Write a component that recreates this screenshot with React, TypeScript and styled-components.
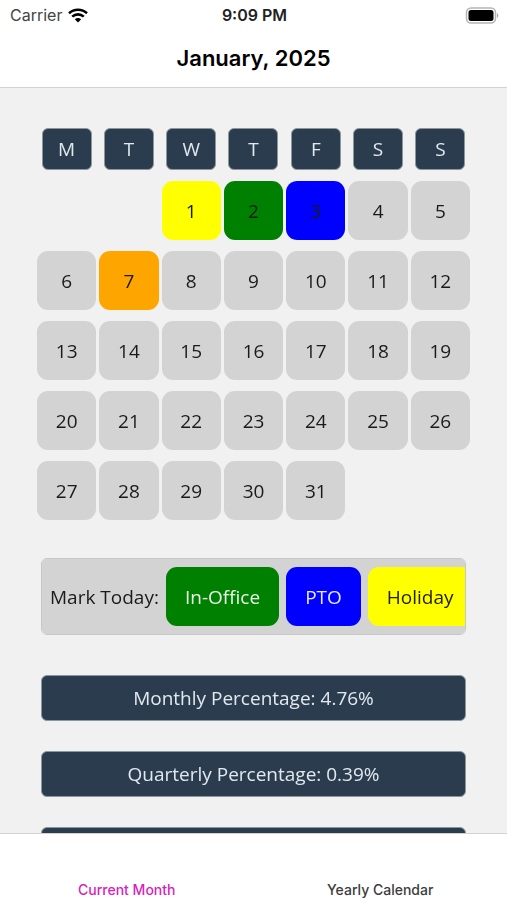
import React, { useState } from "react";
import styled, { createGlobalStyle } from "styled-components";

const GlobalStyle = createGlobalStyle`
  *, *::before, *::after { box-sizing: border-box; }
  body { margin: 0; background: #f1f1f1; }
  button { font: inherit; border: 0; padding: 0; cursor: pointer; }
`;

const bodyFont = `"Open Sans", "Noto Sans", sans-serif`;
const systemFont = `Inter, Roboto, sans-serif`;

const Screen = styled.div`
  display: flex;
  flex-direction: column;
  height: 100vh;
  background: #f1f1f1;
  color: #1a1a1a;
  font-family: ${bodyFont};
  font-size: 19px;
  line-height: 26px;
`;

const Header = styled.header`
  flex: none;
  background: #fff;
  border-bottom: 1px solid #d2d2d2;
  font-family: ${systemFont};
`;

const StatusBar = styled.div`
  display: grid;
  grid-template-columns: 1fr auto 1fr;
  align-items: center;
  height: 30px;
  padding: 0 8px 0 10px;
  font-size: 16px;
  line-height: 20px;
  color: #444;
`;

const Carrier = styled.span`
  display: flex;
  align-items: center;
  gap: 6px;
`;

const Clock = styled.time`
  color: #222;
  font-weight: 600;
`;

const BatteryIcon = styled.svg`
  justify-self: end;
`;

const Title = styled.h1`
  margin: 0;
  padding: 13px 0 14px;
  color: #000;
  font-size: 22px;
  font-weight: 600;
  line-height: 30px;
  text-align: center;
`;

const Content = styled.main`
  flex: 1;
  min-height: 0;
  overflow-y: auto;
  scrollbar-width: none;
  padding: 40px 37px;
`;

const Calendar = styled.section`
  display: grid;
  grid-template-columns: repeat(7, 1fr);
  gap: 11px 3px;
`;

const Weekday = styled.div`
  justify-self: center;
  width: 50px;
  padding: 7px 0;
  border: 1px solid #8b979c;
  border-radius: 6px;
  background: #2c3c4f;
  color: #e1e9ee;
  text-align: center;
`;

const Day = styled.button<{ $fill: string; $first: boolean }>`
  ${({ $first }) => $first && "grid-column-start: 3;"}
  height: 59px;
  border-radius: 11px;
  background: ${({ $fill }) => $fill};
  color: #1a1a1a;
`;

const MarkBar = styled.section`
  display: flex;
  align-items: center;
  gap: 7px;
  margin: 38px 4px 40px;
  padding: 8px;
  border: 1px solid #c6c8c8;
  border-radius: 6px;
  background: #d3d3d3;
  overflow-x: auto;
  scrollbar-width: none;
  white-space: nowrap;
`;

const MarkButton = styled.button<{ $fill: string; $ink: string }>`
  flex: none;
  height: 59px;
  padding: 0 19px;
  border-radius: 11px;
  background: ${({ $fill }) => $fill};
  color: ${({ $ink }) => $ink};
`;

const Stats = styled.section`
  display: grid;
  gap: 30px;
  margin: 0 4px;
`;

const Stat = styled.div`
  min-height: 46px;
  padding: 9px;
  border: 1px solid #8b979c;
  border-radius: 6px;
  background: #2c3c4f;
  color: #e1e9ee;
  text-align: center;
`;

const TabBar = styled.nav`
  flex: none;
  display: grid;
  grid-template-columns: 1fr 1fr;
  border-top: 1px solid #d2d2d2;
  background: #fff;
  font-family: ${systemFont};
  font-size: 14px;
  font-weight: 500;
  line-height: 18px;
`;

const Tab = styled.button<{ $active: boolean }>`
  padding: 47px 0 1px;
  background: none;
  color: ${({ $active }) => ($active ? "#d61fbd" : "#3c3c3c")};
`;

const weekdays = ["M", "T", "W", "T", "F", "S", "S"];
const days = Array.from({ length: 31 }, (_, i) => i + 1);
const marks: Record<number, string> = {
  1: "#ffff00",
  2: "#008000",
  3: "#0000ff",
  7: "#ffa500",
};
const markTypes = [
  { label: "In-Office", fill: "#008000", ink: "#e8f5e8" },
  { label: "PTO", fill: "#0000ff", ink: "#e8e8ff" },
  { label: "Holiday", fill: "#ffff00", ink: "#1f1f00" },
];
const stats = ["Monthly Percentage: 4.76%", "Quarterly Percentage: 0.39%"];
const tabs = ["Current Month", "Yearly Calendar"];

const Wifi = () => (
  <svg width="20" height="15" viewBox="0 0 20 15" aria-hidden="true">
    <g fill="none" stroke="#000" strokeWidth="2.6">
      <path d="M1 5.2C6 .6 14 .6 19 5.2" />
      <path d="M4.2 8.6c3.4-3 8.2-3 11.6 0" />
    </g>
    <path d="M6.8 11.2c1.8-1.6 4.6-1.6 6.4 0L10 14.6z" fill="#000" />
  </svg>
);

const Battery = () => (
  <BatteryIcon width="34" height="17" viewBox="0 0 34 17" aria-hidden="true">
    <rect x="1.5" y="1" width="29" height="15" rx="4.5" fill="none" stroke="#b5b5b5" strokeWidth="1.5" />
    <rect x="3.5" y="3" width="25" height="11" rx="2.5" fill="#000" />
    <path d="M32 6.2c1.8.7 1.8 3.9 0 4.6z" fill="#aaa" />
  </BatteryIcon>
);

export default function App() {
  const [tab, setTab] = useState(tabs[0]);
  return (
    <Screen>
      <GlobalStyle />
      <Header>
        <StatusBar>
          <Carrier>
            Carrier
            <Wifi />
          </Carrier>
          <Clock>9:09 PM</Clock>
          <Battery />
        </StatusBar>
        <Title>January, 2025</Title>
      </Header>
      <Content>
        <Calendar>
          {weekdays.map((name, i) => (
            <Weekday key={i}>{name}</Weekday>
          ))}
          {days.map((day) => (
            <Day key={day} type="button" $first={day === 1} $fill={marks[day] ?? "#d3d3d3"}>
              {day}
            </Day>
          ))}
        </Calendar>
        <MarkBar>
          <span>Mark Today:</span>
          {markTypes.map(({ label, fill, ink }) => (
            <MarkButton key={label} type="button" $fill={fill} $ink={ink}>
              {label}
            </MarkButton>
          ))}
        </MarkBar>
        <Stats>
          {stats.map((text) => (
            <Stat key={text}>{text}</Stat>
          ))}
          <Stat />
        </Stats>
      </Content>
      <TabBar>
        {tabs.map((name) => (
          <Tab key={name} type="button" $active={name === tab} onClick={() => setTab(name)}>
            {name}
          </Tab>
        ))}
      </TabBar>
    </Screen>
  );
}
